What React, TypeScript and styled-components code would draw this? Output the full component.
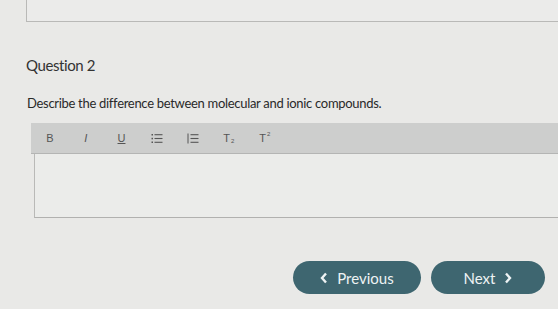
import { FC } from "react";
import { styled, createGlobalStyle } from "styled-components";

const GlobalStyle = createGlobalStyle`
  html, body {
    margin: 0;
    padding: 0;
    background: #e9e9e7;
    font-family: Lato, "Open Sans", sans-serif;
    color: #2b2b2b;
  }
`;

const Page = styled.div`
  width: 558px;
  height: 309px;
  overflow: hidden;
  padding-left: 26px;
  box-sizing: border-box;
`;

const PrevAnswer = styled.div`
  height: 21px;
  margin-right: -20px;
  border-left: 1px solid #b9b9b7;
  border-bottom: 1px solid #b9b9b7;
  background: #ebebea;
`;

const Title = styled.h2`
  margin: 33px 0 0;
  font-size: 15px;
  font-weight: 400;
  line-height: 20px;
  color: #333;
  letter-spacing: -0.4px;
`;

const Prompt = styled.p`
  margin: 20px 0 0 1px;
  font-size: 13px;
  line-height: 16px;
  color: #2a2a2a;
  letter-spacing: -0.3px;
`;

const Editor = styled.div`
  margin: 12px -20px 0 5px;
  display: flex;
  flex-direction: column;
`;

const Toolbar = styled.div`
  height: 30px;
  background: #cdcecd;
  display: flex;
  align-items: center;
  padding-left: 1px;
  border-bottom: 1px solid #b4b5b4;
`;

const ToolButton = styled.span<{ $style?: "italic" | "underline" }>`
  width: 35.8px;
  display: flex;
  justify-content: center;
  align-items: center;
  font-family: "Liberation Sans", Arial, sans-serif;
  font-size: 11px;
  color: #555;
  font-style: ${(p) => (p.$style === "italic" ? "italic" : "normal")};
  text-decoration: ${(p) => (p.$style === "underline" ? "underline" : "none")};
`;

const Script = styled.span<{ $up?: boolean }>`
  font-size: 6px;
  margin-left: 1px;
  position: relative;
  top: ${(p) => (p.$up ? "-4px" : "3px")};
`;

const Field = styled.div`
  height: 63px;
  margin-left: 3px;
  background: #ebecea;
  border-left: 1px solid #b9b9b7;
  border-bottom: 1px solid #b1b1af;
`;

const Nav = styled.div`
  display: flex;
  justify-content: flex-end;
  gap: 10px;
  margin-top: 43px;
  margin-right: 13px;
`;

const NavButton = styled.button<{ $w: number }>`
  width: ${(p) => p.$w}px;
  height: 33px;
  border: none;
  border-radius: 17px;
  background: #3e6670;
  color: #eef3f4;
  font-family: Lato, "Open Sans", sans-serif;
  font-size: 15px;
  display: flex;
  align-items: center;
  justify-content: center;
  gap: 9px;
  padding: 0;
`;

const Chevron: FC<{ dir: "left" | "right" }> = ({ dir }) => (
  <svg width="8" height="12" viewBox="0 0 8 12">
    <path
      d={dir === "left" ? "M6 1.5 L2 6 L6 10.5" : "M2 1.5 L6 6 L2 10.5"}
      fill="none"
      stroke="#eef3f4"
      strokeWidth="2.4"
    />
  </svg>
);

const ListIcon: FC<{ numbered?: boolean }> = ({ numbered }) => (
  <svg width="12" height="11" viewBox="0 0 12 11">
    {numbered ? (
      <path d="M1 0.5 V10.5" stroke="#555" strokeWidth="1" />
    ) : (
      <g fill="#555">
        <rect x="0.5" y="1" width="1.5" height="1.5" />
        <rect x="0.5" y="4.8" width="1.5" height="1.5" />
        <rect x="0.5" y="8.5" width="1.5" height="1.5" />
      </g>
    )}
    <g stroke="#555" strokeWidth="1.1">
      <path d="M3.5 1.7 H11.5" />
      <path d="M3.5 5.5 H11.5" />
      <path d="M3.5 9.3 H11.5" />
    </g>
  </svg>
);

const App: FC = () => (
  <>
    <GlobalStyle />
    <Page>
      <PrevAnswer />
      <Title>Question 2</Title>
      <Prompt>Describe the difference between molecular and ionic compounds.</Prompt>
      <Editor>
        <Toolbar>
          <ToolButton>B</ToolButton>
          <ToolButton $style="italic">I</ToolButton>
          <ToolButton $style="underline">U</ToolButton>
          <ToolButton>
            <ListIcon />
          </ToolButton>
          <ToolButton>
            <ListIcon numbered />
          </ToolButton>
          <ToolButton>
            T<Script>2</Script>
          </ToolButton>
          <ToolButton>
            T<Script $up>2</Script>
          </ToolButton>
        </Toolbar>
        <Field />
      </Editor>
      <Nav>
        <NavButton $w={128}>
          <Chevron dir="left" />
          Previous
        </NavButton>
        <NavButton $w={114}>
          Next
          <Chevron dir="right" />
        </NavButton>
      </Nav>
    </Page>
  </>
);

export default App;
